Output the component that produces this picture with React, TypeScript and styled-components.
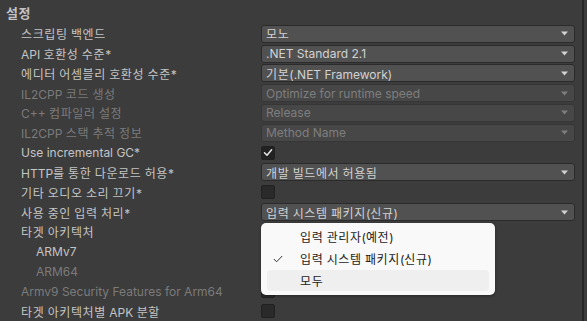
import React from "react";
import styled, { createGlobalStyle } from "styled-components";

const GlobalStyle = createGlobalStyle`
    body {
        margin: 0;
        background: #3c3c3c;
        font-family: Inter, "Noto Sans CJK KR", sans-serif;
        font-size: 12px;
    }
`;

type Field =
    | { kind: "select"; value: string; disabled?: boolean }
    | { kind: "check"; checked: boolean; disabled?: boolean }
    | { kind: "none" };

type Row = { label: string; indent?: boolean; disabled?: boolean; field: Field };

const rows: Row[] = [
    { label: "스크립팅 백엔드", field: { kind: "select", value: "모노" } },
    { label: "API 호환성 수준*", field: { kind: "select", value: ".NET Standard 2.1" } },
    { label: "에디터 어셈블리 호환성 수준*", field: { kind: "select", value: "기본(.NET Framework)" } },
    { label: "IL2CPP 코드 생성", disabled: true, field: { kind: "select", value: "Optimize for runtime speed", disabled: true } },
    { label: "C++ 컴파일러 설정", disabled: true, field: { kind: "select", value: "Release", disabled: true } },
    { label: "IL2CPP 스택 추적 정보", disabled: true, field: { kind: "select", value: "Method Name", disabled: true } },
    { label: "Use incremental GC*", field: { kind: "check", checked: true } },
    { label: "HTTP를 통한 다운로드 허용*", field: { kind: "select", value: "개발 빌드에서 허용됨" } },
    { label: "기타 오디오 소리 끄기*", field: { kind: "check", checked: false } },
    { label: "사용 중인 입력 처리*", field: { kind: "select", value: "입력 시스템 패키지(신규)" } },
    { label: "타겟 아키텍처", field: { kind: "none" } },
    { label: "ARMv7", indent: true, field: { kind: "check", checked: true } },
    { label: "ARM64", indent: true, disabled: true, field: { kind: "check", checked: false, disabled: true } },
    { label: "Armv9 Security Features for Arm64", disabled: true, field: { kind: "check", checked: false, disabled: true } },
    { label: "타겟 아키텍처별 APK 분할", field: { kind: "check", checked: false } },
];

const menuItems = [
    { label: "입력 관리자(예전)", selected: false, hover: false },
    { label: "입력 시스템 패키지(신규)", selected: true, hover: false },
    { label: "모두", selected: false, hover: true },
];

// Hangul in the original renders a little wider than Noto CJK, so widen those runs only
const Text = ({ children }: { children: string }) => (
    <span>
        {children.split(/([\uAC00-\uD7A3]+)/).map((part, i) =>
            /[\uAC00-\uD7A3]/.test(part) ? <Hangul key={i}>{part}</Hangul> : part
        )}
    </span>
);

const Arrow = () => (
    <svg width="7" height="5" viewBox="0 0 7 5">
        <path d="M0 0.5 L7 0.5 L3.5 4.5 Z" fill="currentColor" />
    </svg>
);

const Tick = ({ color }: { color: string }) => (
    <svg width="10" height="9" viewBox="0 0 10 9">
        <path d="M1.5 4.8 L4 7.2 L8.6 1.8" stroke={color} strokeWidth="1.5" fill="none" strokeLinecap="round" strokeLinejoin="round" />
    </svg>
);

const MenuTick = () => (
    <svg width="10" height="8" viewBox="0 0 10 8">
        <path d="M0.8 4 L3.6 6.8 L9.2 1" stroke="#333" strokeWidth="1" fill="none" />
    </svg>
);

const renderField = (field: Field) => {
    if (field.kind === "select") {
        return (
            <Select $disabled={field.disabled}>
                <Text>{field.value}</Text>
                <Arrow />
            </Select>
        );
    }
    if (field.kind === "check") {
        return <CheckBox $checked={field.checked}>{field.checked && <Tick color="#e8e8e8" />}</CheckBox>;
    }
    return null;
};

const App = () => {
    return (
        <Page>
            <GlobalStyle />
            <Panel>
                <Title>
                    <Text>설정</Text>
                </Title>
                {rows.map((row) => (
                    <RowBox key={row.label}>
                        <Label $indent={row.indent} $disabled={row.disabled}>
                            <Text>{row.label}</Text>
                        </Label>
                        <FieldCell>{renderField(row.field)}</FieldCell>
                    </RowBox>
                ))}
                <Menu>
                    {menuItems.map((item) => (
                        <MenuItem key={item.label} $hover={item.hover}>
                            <MenuCheck>{item.selected && <MenuTick />}</MenuCheck>
                            <Text>{item.label}</Text>
                        </MenuItem>
                    ))}
                </Menu>
            </Panel>
            <Divider />
        </Page>
    );
};

export default App;

const Hangul = styled.span`
    letter-spacing: 0.6px;
`;

const Page = styled.div`
    display: flex;
    width: 587px;
    height: 321px;
    overflow: hidden;
    background: #3c3c3c;
`;

const Panel = styled.div`
    position: relative;
    width: 582px;
    display: flex;
    flex-direction: column;
`;

const Divider = styled.div`
    width: 2px;
    background: #262626;
`;

const Title = styled.div`
    height: 24px;
    padding: 5px 0 0 6px;
    box-sizing: border-box;
    color: #c4c4c4;
    font-weight: 700;
    font-size: 13px;
    line-height: 17px;
`;

const RowBox = styled.div`
    height: 20px;
    display: flex;
    align-items: center;
`;

const Label = styled.div<{ $indent?: boolean; $disabled?: boolean }>`
    width: 261px;
    flex: none;
    box-sizing: border-box;
    padding-left: ${(p) => (p.$indent ? 36 : 21)}px;
    color: ${(p) => (p.$disabled ? "#7b7b7b" : "#c4c4c4")};
    white-space: nowrap;
`;

const FieldCell = styled.div`
    width: 314px;
    display: flex;
    align-items: center;
`;

const Select = styled.div<{ $disabled?: boolean }>`
    width: 100%;
    height: 18px;
    box-sizing: border-box;
    display: flex;
    align-items: center;
    justify-content: space-between;
    padding: 0 6px 0 4px;
    border: 1px solid ${(p) => (p.$disabled ? "#363636" : "#2b2b2b")};
    border-radius: 3px;
    background: ${(p) => (p.$disabled ? "#474747" : "#515151")};
    color: ${(p) => (p.$disabled ? "#7e7e7e" : "#d2d2d2")};
    white-space: nowrap;
`;

const CheckBox = styled.div<{ $checked?: boolean }>`
    width: 14px;
    height: 14px;
    box-sizing: border-box;
    border: 1px solid #212121;
    border-radius: 2px;
    background: ${(p) => (p.$checked ? "#222222" : "#2a2a2a")};
    display: flex;
    align-items: center;
    justify-content: center;
`;

const Menu = styled.div`
    position: absolute;
    left: 261px;
    top: 223px;
    width: 234px;
    box-sizing: border-box;
    padding: 3px 6px 3px 6px;
    background: #f9f9f9;
    border-radius: 5px;
    box-shadow: 0 1px 3px rgba(0, 0, 0, 0.35);
    display: flex;
    flex-direction: column;
`;

const MenuItem = styled.div<{ $hover?: boolean }>`
    height: 21px;
    margin-bottom: 1px;
    display: flex;
    align-items: center;
    border-radius: 4px;
    background: ${(p) => (p.$hover ? "#efefef" : "transparent")};
    color: #1c1c1c;
    font-size: 12px;
    white-space: nowrap;
`;

const MenuCheck = styled.span`
    width: 33px;
    padding-left: 6px;
    box-sizing: border-box;
    display: flex;
    align-items: center;
`;
